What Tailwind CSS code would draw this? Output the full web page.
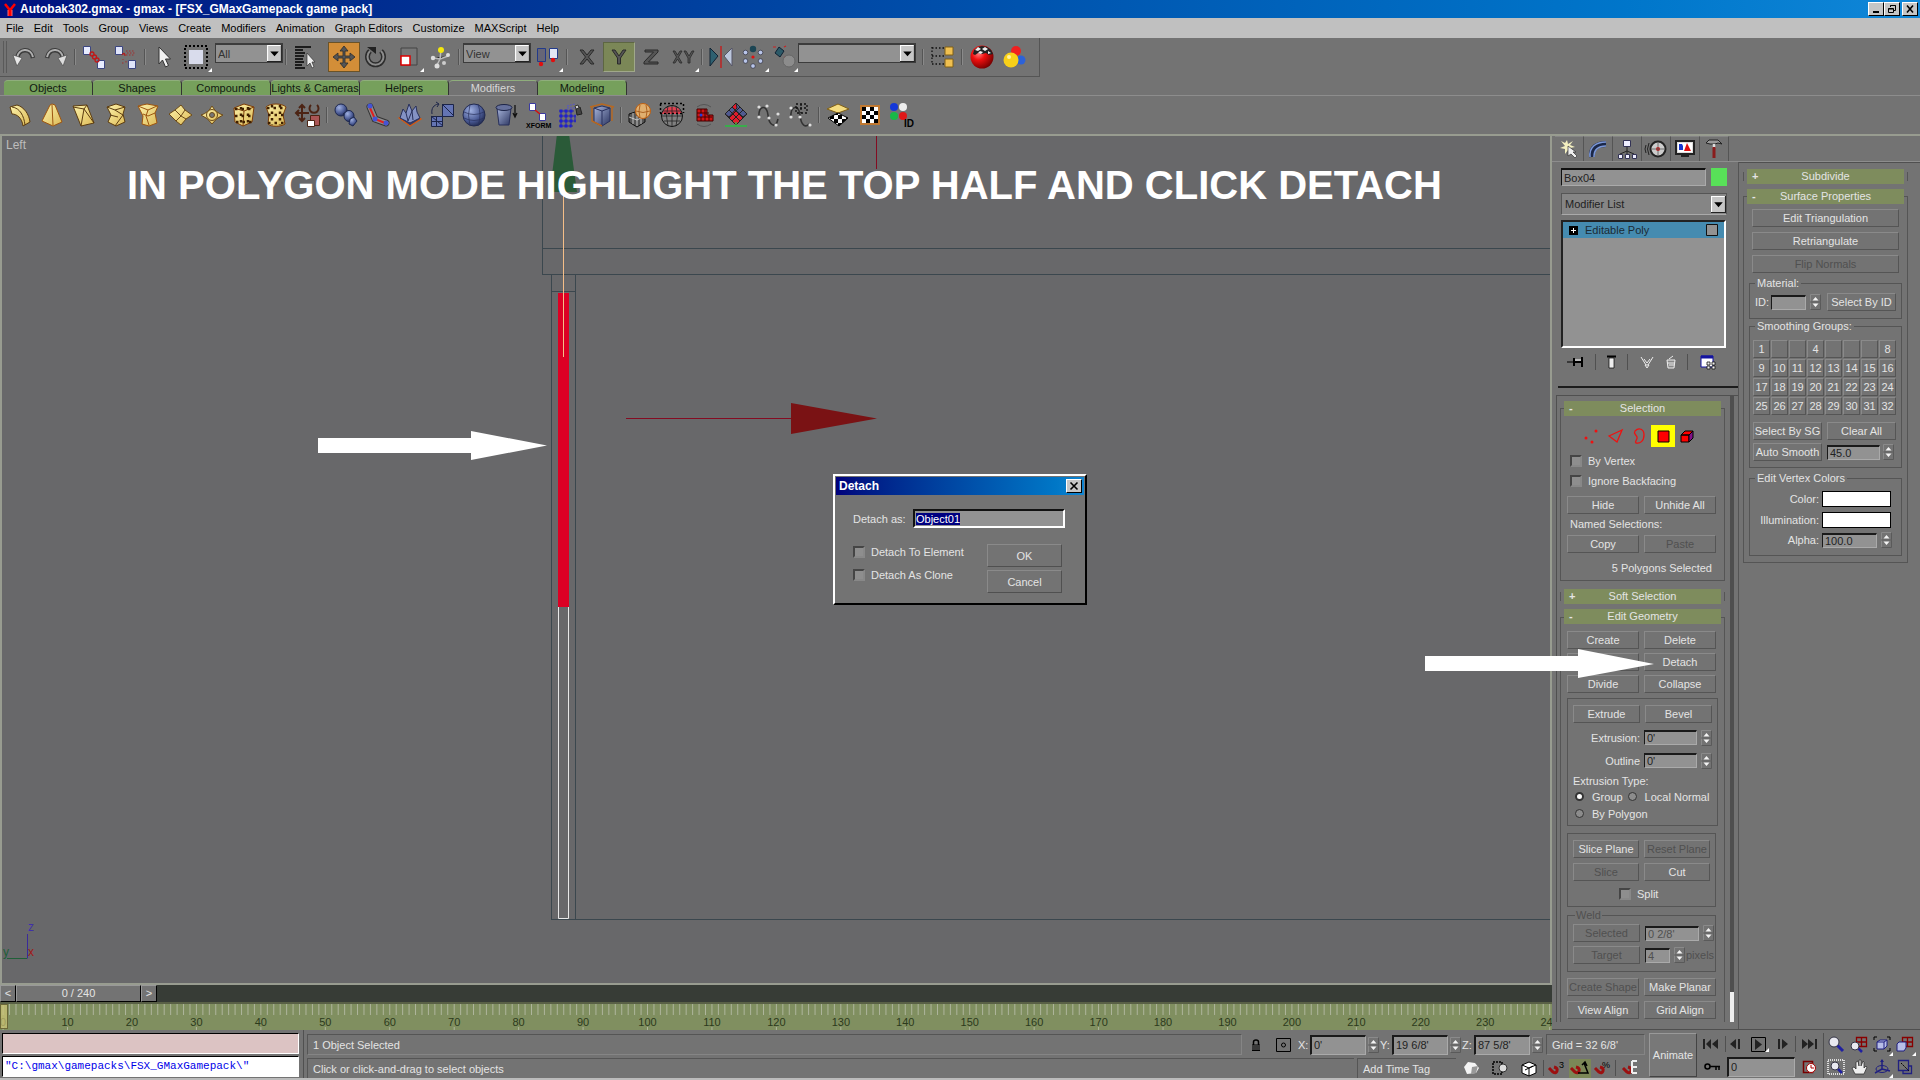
<!DOCTYPE html>
<html lang="en">
<head>
<meta charset="utf-8">
<title>Autobak302.gmax - gmax</title>
<script src="https://cdn.jsdelivr.net/npm/@tailwindcss/browser@4"></script>
</head>
<body class="h-screen min-h-[1080px] min-w-[1500px] overflow-hidden flex flex-col bg-[#737373] text-[11px] leading-[14px] text-[#e4e4e4] font-['Liberation_Sans',Arial,sans-serif] [&_svg]:block [&_svg]:shrink-0 [&_svg]:overflow-visible">

<!-- shared symbols -->
<svg class="absolute" width="0" height="0" aria-hidden="true">
  <symbol id="spin" viewBox="0 0 11 16"><path d="M.5 15.500V.5H10.500" fill="none" stroke="#8a8a8a"/><path d="M.5 15.500H10.500V.5" fill="none" stroke="#5a5a5a"/><path d="M0 8h11" stroke="#606060"/><path d="M5.500 3 8.500 6.500H2.500zM5.500 13 8.500 9.500H2.500z" fill="#f4f4f4"/></symbol>
  <symbol id="drop" viewBox="0 0 14 16"><path d="M0 0h14v16H0z" fill="#c6c6c6"/><path d="M.5 15V.5H13" fill="none" stroke="#fff"/><path d="M0 15.500h13.500V0" fill="none" stroke="#222"/><path d="M3 6h8L7 10.500z" fill="#000"/></symbol>
  <symbol id="fly" viewBox="0 0 4 4"><path d="M4 0v4H0z" fill="#fff"/></symbol>
  <linearGradient id="steel" x1="0" y1="0" x2="1" y2="1"><stop offset="0" stop-color="#a9b6dc"/><stop offset="1" stop-color="#2b3560"/></linearGradient>
  <linearGradient id="gold" x1="0" y1="0" x2="1" y2="1"><stop offset="0" stop-color="#fdf3ac"/><stop offset="1" stop-color="#dcb955"/></linearGradient>
  <radialGradient id="redball" cx=".35" cy=".35" r=".7"><stop offset="0" stop-color="#ff8080"/><stop offset=".4" stop-color="#f01010"/><stop offset="1" stop-color="#700"/></radialGradient>
  <radialGradient id="blueball" cx=".35" cy=".3" r=".8"><stop offset="0" stop-color="#9fb0e0"/><stop offset=".6" stop-color="#4a5a94"/><stop offset="1" stop-color="#1a2244"/></radialGradient>
  <pattern id="chk" width="8" height="8" patternUnits="userSpaceOnUse"><path d="M0 0h8v8H0z" fill="#fff"/><path d="M0 0h4v4H0zM4 4h4v4H4z" fill="#000"/></pattern>
</svg>

<!-- title bar -->
<header class="h-[18px] shrink-0 flex items-center justify-between bg-linear-to-r from-[#00107f] to-[#1087d8] text-white pl-1 pr-[2px]">
  <h1 class="flex items-center gap-[4px] text-[12px] font-bold">
    <svg width="12" height="15" viewBox="0 0 12 15"><path d="M1 2 5 7v7M11 2 7 7v7M6 7v7" stroke="#f00" stroke-width="2.500" fill="none"/><path d="M4 8v6M8 8v6" stroke="#fbb" stroke-width=".6"/></svg>
    Autobak302.gmax - gmax - [FSX_GMaxGamepack game pack]
  </h1>
  <div class="flex text-black [&_button]:w-4 [&_button]:h-[14px] [&_button]:bg-[#c6c6c6] [&_button]:border [&_button]:border-t-white [&_button]:border-l-white [&_button]:border-b-black [&_button]:border-r-black [&_button]:flex [&_button]:items-center [&_button]:justify-center">
    <button aria-label="Minimize"><svg width="10" height="10"><path d="M2 8h6" stroke="#000" stroke-width="2"/></svg></button>
    <button aria-label="Restore"><svg width="10" height="10"><path d="M3.500 3V1.500h5v5H7M3.500 1.500h5M1.500 4.500h5v4h-5zM1.500 5h5" fill="none" stroke="#000"/></svg></button>
    <button aria-label="Close" class="ml-[2px]"><svg width="10" height="10"><path d="M2 1.500 8 8.500M8 1.500 2 8.500" stroke="#000" stroke-width="1.600"/></svg></button>
  </div>
</header>

<!-- menu bar -->
<nav class="h-5 shrink-0 flex items-center gap-[10px] bg-[#c0c0c0] text-black pl-[6px]">
  <a href="#">File</a><a href="#">Edit</a><a href="#">Tools</a><a href="#">Group</a><a href="#">Views</a><a href="#">Create</a><a href="#">Modifiers</a><a href="#">Animation</a><a href="#">Graph Editors</a><a href="#">Customize</a><a href="#">MAXScript</a><a href="#">Help</a>
</nav>

<!-- main toolbar -->
<div class="h-[39px] shrink-0 w-[1040px] flex items-center border-b border-r border-[#555] pl-[2px] [&>button]:relative [&>button]:w-8 [&>button]:h-[30px] [&>button]:shrink-0 [&>button]:flex [&>button]:items-center [&>button]:justify-center [&>i]:w-[2px] [&>i]:mx-[2px] [&>i]:h-4 [&>i]:shrink-0 [&>i]:border-l [&>i]:border-r [&>i]:border-l-[#555] [&>i]:border-r-[#8a8a8a]">
  <span class="w-1 h-8 border-x border-[#5a5a5a] ml-[1px] mr-[1px]"></span>
  <button aria-label="Undo"><svg width="24" height="22"><path d="M5 13C6 2 19 1 21 12" fill="none" stroke="#3c3c3c" stroke-width="4.500"/><path d="M5 12C6 2 19 1 21 11" fill="none" stroke="#b0b0b0" stroke-width="2"/><path d="M1 9 10 12 5 20z" fill="#e8e8e8" stroke="#444" stroke-width=".6"/></svg></button>
  <button aria-label="Redo"><svg width="24" height="22"><path d="M3 12C5 1 18 2 19 13" fill="none" stroke="#3c3c3c" stroke-width="4.500"/><path d="M3 11C5 1 18 2 19 12" fill="none" stroke="#b0b0b0" stroke-width="2"/><path d="M23 9 14 12 19 20z" fill="#ddd" stroke="#444" stroke-width=".6"/></svg></button>
  <i></i>
  <button aria-label="Select and link"><svg width="24" height="24"><path d="M1.500 1.500h7v8h-7zM15.500 15.500h7v8h-7z" fill="#e8ecff" stroke="#3c4680"/><g fill="none" stroke="#c01818" stroke-width="1.300"><circle cx="10" cy="9" r="2"/><circle cx="12.500" cy="12" r="2"/><circle cx="15" cy="15" r="2"/></g></svg></button>
  <button aria-label="Unlink"><svg width="24" height="24"><path d="M1.500 1.500h7v8h-7zM14.500 15.500h7v8h-7z" fill="#dfe4fa" stroke="#3c4680"/><path d="M8 10c2-3 3-1 3 1" fill="none" stroke="#b02020" stroke-width="1.300"/><path d="M12 6h9M13 8h9M12 10h8M9 14v1M12 16v2M8 18h3" fill="none" stroke="#a03030" stroke-dasharray="1.500 1.500"/></svg></button>
  <i></i>
  <button aria-label="Select"><svg width="14" height="24"><path d="M2 2v17l3.500-4 3 7 3-1.500-3-6.500h5z" fill="#f2f2f2" stroke="#333"/></svg></button>
  <button aria-label="Region"><svg width="26" height="26"><path d="M2 2h22v22H2z" fill="none" stroke="#000" stroke-width="2" stroke-dasharray="2 2"/><path d="M6 6h14v14H6z" fill="#d9dcec"/></svg><svg class="absolute right-0 bottom-0" width="4" height="4"><use href="#fly"/></svg></button>
  <div class="self-start mt-[5px] ml-[3px] w-[68px] h-5 flex items-center bg-[#929292] border border-t-2 border-[#3c3c3c] text-[#333]"><select aria-label="Selection filter" class="appearance-none w-0 grow pl-[2px] h-full"><option>All</option></select><svg width="15" height="17"><use href="#drop"/></svg></div>
  <i class="ml-1"></i>
  <button aria-label="Select by name"><svg width="24" height="26"><path d="M2 3h16M2 6h8M2 9h10M2 12h9M2 15h8M2 18h9M2 21h7M2 24h10" stroke="#000" stroke-width="1.500"/><path d="M14 9v13l3-3 2 5 2-1-2-5h3z" fill="#eee" stroke="#333" stroke-width=".7"/></svg></button>
  <button aria-label="Move" class="ml-[7px] bg-[#d38e38] border border-[#6b5328]"><svg width="24" height="24"><path d="M12 1l4 5h-3v5h5V8l5 4-5 4v-3h-5v5h3l-4 5-4-5h3v-5H6v3l-5-4 5-4v3h5V6H8z" fill="#555" stroke="#2b2b2b" stroke-width=".8"/></svg></button>
  <button aria-label="Rotate"><svg width="24" height="24"><path d="M6 6a8 8 0 1 0 11 0" fill="none" stroke="#2c2c2c" stroke-width="5"/><path d="M6 6a8 8 0 1 0 11 0" fill="none" stroke="#8c8c8c" stroke-width="2"/><path d="M3 2h9v7z" fill="#222"/></svg></button>
  <button aria-label="Scale"><svg width="20" height="20"><path d="M3 1h16v17H3z" fill="#777" stroke="#444"/><path d="M3 9h9v9H3z" fill="#fff" stroke="#d00" stroke-width="1.500"/></svg><svg class="absolute right-0 bottom-0" width="4" height="4"><use href="#fly"/></svg></button>
  <button aria-label="Manipulate"><svg width="22" height="22"><path d="M12 4 11 13M5 12l6 1 8-3M11 13l-3 6" stroke="#bbb" stroke-width="1.500"/><circle cx="12" cy="4" r="3" fill="#f4e80c"/><circle cx="4" cy="12" r="2.200" fill="#ddd"/><circle cx="19" cy="9" r="2" fill="#ddd"/><circle cx="8" cy="20" r="2.500" fill="#ddd"/><circle cx="15" cy="17" r="2" fill="#ccc"/></svg></button>
  <i class="mr-[3px]!"></i>
  <div class="self-start mt-[5px] w-[68px] h-5 flex items-center bg-[#929292] border border-t-2 border-[#3c3c3c] text-[#333]"><select aria-label="Coordinate system" class="appearance-none w-0 grow pl-[2px] h-full"><option>View</option></select><svg width="15" height="17"><use href="#drop"/></svg></div>
  <button aria-label="Pivot"><svg width="24" height="22"><path d="M2.500 2.500h8v13h-8z" fill="#667" stroke="#223a8a"/><path d="M14.500 2.500h8v10h-8z" fill="#e2e6f6" stroke="#223a8a"/><circle cx="6" cy="18" r="2.200" fill="#e01010"/><circle cx="18" cy="14" r="2.200" fill="#e01010"/></svg><svg class="absolute right-0 bottom-0" width="4" height="4"><use href="#fly"/></svg></button>
  <i class="mx-[3px]!"></i>
  <button aria-label="Constrain X"><svg width="18" height="18"><path d="M2 2h3l4 5 4-5h3l-5.500 7 5.500 7h-3L9 11l-4 5H2l5.500-7z" fill="#555" stroke="#2a2a2a"/></svg></button>
  <button aria-label="Constrain Y" class="bg-[#7b8757] border border-[#5d6642] border-b-[#a0a88a] border-r-[#a0a88a]"><svg width="18" height="18"><path d="M2 2h3l4 6 4-6h3l-5.500 8v6h-3v-6z" fill="#555" stroke="#2a2a2a"/></svg></button>
  <button aria-label="Constrain Z"><svg width="18" height="18"><path d="M3 2h13v2L6.500 14H16v2H2v-2l9.500-10H3z" fill="#555" stroke="#2a2a2a"/></svg></button>
  <button aria-label="Constrain XY"><svg width="22" height="14"><path d="M1 1h2l2.500 4L8 1h2L6.500 7l3.500 6H8L5.500 9 3 13H1l3.500-6zM12 1h2l3 5 3-5h2l-4 7v5h-2V8z" fill="#555" stroke="#2a2a2a" stroke-width=".8"/></svg><svg class="absolute right-0 bottom-0" width="4" height="4"><use href="#fly"/></svg></button>
  <i></i>
  <button aria-label="Mirror"><svg width="24" height="22"><path d="M1 2l8 8-8 10z" fill="#2e6070" stroke="#123"/><path d="M23 2l-8 8 8 10z" fill="#bcc6dc" stroke="#556"/><path d="M12 0v22" stroke="#d01010" stroke-width="1.200"/></svg></button>
  <button aria-label="Array"><svg width="24" height="24"><circle cx="12" cy="4" r="3.200" fill="#1d4654"/><g fill="#b9c6ea" stroke="#334" stroke-width=".7"><circle cx="4.500" cy="7.500" r="2.300"/><circle cx="19.500" cy="7.500" r="2.300"/><circle cx="4.500" cy="16" r="2.300"/><circle cx="19.500" cy="16" r="2.300"/><circle cx="12" cy="21" r="2.300"/></g><circle cx="12" cy="12" r="1.600" fill="#e01010"/></svg><svg class="absolute right-0 bottom-0" width="4" height="4"><use href="#fly"/></svg></button>
  <button aria-label="Align" class="w-[29px]!"><svg width="26" height="26"><path d="M8 3l5 4-4 6-5-4z" fill="#2c5a68" stroke="#123"/><path d="M2 3h3M13 13l3 2M13 3l2-1" stroke="#c22" stroke-width="1.200"/><circle cx="18" cy="17" r="6" fill="#8c8c8c" stroke="#666"/></svg><svg class="absolute right-0 bottom-0" width="4" height="4"><use href="#fly"/></svg></button>
  <div class="self-start mt-[5px] w-[118px] h-5 flex items-center bg-[#929292] border border-t-2 border-[#3c3c3c] text-[#333]"><select aria-label="Named selection" class="appearance-none w-0 grow pl-[2px] h-full"><option></option></select><svg width="15" height="17"><use href="#drop"/></svg></div>
  <i class="ml-[6px]!"></i>
  <button aria-label="Track view"><svg width="24" height="24"><path d="M2 2v17M2 3h12M2 11h12M2 19h12" stroke="#111" stroke-width="1.300" stroke-dasharray="1.500 2"/><path d="M15 2h8v8h-8zM15 14h8v8h-8z" fill="#f0c050" stroke="#806018"/></svg></button>
  <i class="mx-[3px]!"></i>
  <button aria-label="Materials"><svg width="24" height="24"><circle cx="12" cy="12" r="11.500" fill="url(#redball)"/><path d="M4 5l4-3 4-1 5 1 4 3 2 4-4 1-3-2-4 1-4-1-3 2-2-1z" fill="#222"/><path d="M8 2l3 2-3 2-3-1zM15 2l3 2-3 2-3-2zM10 6l3 1-2 2-3-1zM18 6l3 2-3 1z" fill="#eee"/></svg></button>
  <button aria-label="Material navigator"><svg width="24" height="24"><circle cx="14" cy="6" r="5" fill="#f02020"/><circle cx="19" cy="15" r="4.500" fill="#2c62d8"/><circle cx="9" cy="15" r="7.500" fill="#f8d018"/><circle cx="7" cy="12" r="2" fill="#fff3a0"/></svg></button>
</div>

<!-- tab panel -->
<div class="h-[19px] shrink-0 flex items-end border-b border-[#8d8d8d] pl-1 text-[#101810] [&>button]:w-[89px] [&>button]:h-[15px] [&>button]:shrink-0 [&>button]:border-r [&>button]:border-r-[#333] [&>button]:rounded-t-sm [&>button]:border-t [&>button]:border-t-[#8fae7c] [&>button]:whitespace-nowrap">
  <button class="bg-[#76a05c]">Objects</button><button class="bg-[#76a05c]">Shapes</button><button class="bg-[#76a05c]">Compounds</button><button class="bg-[#76a05c]">Lights &amp; Cameras</button><button class="bg-[#76a05c]">Helpers</button><button class="text-[#d8d8d8]">Modifiers</button><button class="bg-[#76a05c]">Modeling</button>
</div>
<div class="h-[40px] shrink-0 flex items-center pl-1 border-b-2 border-[#989c90] [&>button]:w-8 [&>button]:h-8 [&>button]:shrink-0 [&>button]:flex [&>button]:items-center [&>button]:justify-center [&>i]:w-[2px] [&>i]:mx-[2px] [&>i]:h-4 [&>i]:border-l [&>i]:border-r [&>i]:border-l-[#555] [&>i]:border-r-[#8a8a8a]">
  <button aria-label="Bend"><svg width="24" height="24" stroke="#5c3c10" fill="url(#gold)"><path d="M2 4l7-2c7 2 12 9 13 17l-7 4C14 15 9 11 4 11z"/><path d="M4 4c8 1 12 9 13 18" fill="none"/></svg></button>
  <button aria-label="Taper"><svg width="24" height="24" stroke="#9c5410" fill="url(#gold)"><path d="M12 1l3 1 7 17-9 4L2 18 10 2z"/><path d="M12 2l1 20" fill="none"/></svg></button>
  <button aria-label="Skew"><svg width="24" height="24" stroke="#5c3c10" fill="url(#gold)"><path d="M1 3l14-1 7 18-13 3z"/><path d="M1 4l11 2 10 14M12 6l3-4M12 6l-3 17" fill="none"/></svg></button>
  <button aria-label="Twist"><svg width="24" height="24" stroke="#5c3c10" fill="url(#gold)"><path d="M3 4l9-3 9 3-2 7 2 8-9 4-8-4 3-7z"/><path d="M3 4l8 3 10-3M11 7l8 5-8 11M6 12l8 2" fill="none"/></svg></button>
  <button aria-label="Noise"><svg width="24" height="24" stroke="#9c5410" fill="url(#gold)"><path d="M2 3l9-2 11 2-3 7 2 10-8 3-7-2 1-8z"/><path d="M2 3l10 4 9-4M12 7l-2 6 3 9M7 11l5 2 7-3" fill="none"/></svg></button>
  <button aria-label="Wave"><svg width="26" height="24" stroke="#6c4a18" fill="url(#gold)"><path d="M2 11l6-4 6-5 4 5 7 5-6 4-5 6-5-4z"/><path d="M8 7l6 6 5 3M18 7l-4 6-5 5" fill="none"/></svg></button>
  <button aria-label="Ripple"><svg width="26" height="24" stroke="#6c4a18" fill="url(#gold)"><path d="M2 12Q9 10 13 3q4 7 11 9-7 3-11 9-4-6-11-9z"/><circle cx="13" cy="12" r="5.500"/><circle cx="13" cy="12" r="2.500" fill="#777"/></svg></button>
  <button aria-label="FFD box"><svg width="24" height="24" stroke="#7c3c08" fill="url(#gold)"><path d="M2 5l10-4 10 3-2 15-9 4-8-4z"/><path d="M2 5l10 3 10-4M12 8l-1 15" fill="none"/><path d="M3 6h18M3 13h18M4 19h16M9 4v18M16 4v16" fill="none" stroke="#402000" stroke-width="2.500" stroke-dasharray="2.500 4"/></svg></button>
  <button aria-label="FFD cylinder"><svg width="22" height="24" stroke="#7c3c08" fill="url(#gold)"><path d="M1 4c4-4 16-4 20 0l-3 8 2 9c-4 3-14 3-17 0l1-9z"/><path d="M2 5h19M3 12h16M3 20h17M7 2v20M15 2v20" fill="none" stroke="#402000" stroke-width="2.500" stroke-dasharray="2.500 4"/></svg></button>
  <button aria-label="Transform"><svg width="26" height="26"><path d="M7 3v16M1 11h13M4 6l3-3 3 3M4 16l3 3 3-3M4 8l-3 3 3 3" fill="none" stroke="#4c2414" stroke-width="2"/><path d="M16 3a4.500 4.500 0 1 0 6 0" fill="none" stroke="#4c2414" stroke-width="2"/><path d="M15.500 13.500h9v10h-9z" fill="#a55" stroke="#4c2414"/><path d="M12.500 18.500h7v6h-7z" fill="#fff" stroke="#4c2414"/></svg></button>
  <i></i>
  <button aria-label="Skin"><svg width="24" height="24" fill="url(#blueball)" stroke="#1d2850"><circle cx="7" cy="7" r="6"/><path d="M9 11l5-4 4 4-5 5z"/><ellipse cx="15" cy="13" rx="5" ry="5.500"/><path d="M16 16l4-2 3 4-4 5-4-2z"/></svg></button>
  <button aria-label="Bones"><svg width="24" height="24"><path d="M4 4l5 12 11 4" fill="none" stroke="#333" stroke-width="7" stroke-linecap="round"/><path d="M4 4l5 12 11 4" fill="none" stroke="#8c8c8c" stroke-width="5" stroke-linecap="round"/><path d="M4 5l5 11 10 4" fill="none" stroke="#e02020" stroke-width="2"/><g fill="#4454d4"><circle cx="4" cy="3" r="2.500"/><circle cx="9" cy="16" r="2.500"/><circle cx="20" cy="20" r="2.500"/></g></svg></button>
  <button aria-label="Displace"><svg width="26" height="26"><path d="M2 16l11-5 11 6-11 7z" fill="#383f68" stroke="#d85a10" stroke-width="1.300"/><path d="M3 16l3-9 3 4 3-9 3 7 4-5 1 6 3 6-10 5z" fill="#8492c4" stroke="#28305c"/><path d="M9 11l2 8 4-10 1 9" fill="none" stroke="#28305c"/></svg></button>
  <button aria-label="UV scale"><svg width="26" height="26" fill="#6474b4" stroke="#1c2448"><path d="M13.500 2.500h11v12h-11zM2.500 14.500h5v5h-5zM7.500 14.500h6v5h-6zM2.500 19.500h5v5h-5zM7.500 19.500h6v5h-6z"/><path d="M13 2l12 12M2 14l12 10M3 12C2 6 5 3 9 2M7 0l3 2-2 3" fill="none"/></svg></button>
  <button aria-label="Spherify"><svg width="24" height="24"><circle cx="12" cy="12" r="11" fill="url(#blueball)" stroke="#222a50"/><path d="M2 9q10 5 20 0M2 15q10 5 20 0M8 1q-3 11 0 22M16 1q4 11 0 22" fill="none" stroke="#28305c" stroke-width=".7"/></svg></button>
  <button aria-label="Push"><svg width="24" height="24"><path d="M3 5h14l-2 17H5z" fill="url(#steel)" stroke="#28305c"/><ellipse cx="10" cy="4.500" rx="8" ry="3" fill="#66719c" stroke="#1c2448"/><path d="M21 2v11M19 10l2 4 2-4" stroke="#111" stroke-width="1.300" fill="none"/></svg></button>
  <button aria-label="XForm"><svg width="26" height="26"><path d="M4.500 1.500h6v7h-6zM14.500 11.500h6v7h-6z" fill="#fff" stroke="#3a3aa0"/><path d="M10 8l5 4" stroke="#d01010" stroke-width="1.600"/><text x="1" y="26" font-size="7" font-weight="bold" fill="#000">XFORM</text></svg></button>
  <button aria-label="FFD select"><svg width="26" height="24"><path d="M2 8h15M2 13h17M2 18h17M2 23h14M4 7v17M9 7v17M14 7v17M18 12v7" stroke="#2828a8" stroke-width="1"/><path d="M2.500 8h15M2.500 13h16M2.500 18h16M2.500 23h12" stroke="#2020d0" stroke-width="3" stroke-dasharray="3 2"/><path d="M10 3l8-2M10 5h8" stroke="#55c" stroke-dasharray="2 1"/><path d="M19 6l4-2 2 7-5 1z" fill="#444" stroke="#222"/><path d="M18 3l3-1 1 3-3 1z" fill="#ccc" stroke="#333"/></svg></button>
  <button aria-label="Shell"><svg width="26" height="24"><path d="M5 5l8-2 8 2v13l-8 5-8-4z" fill="url(#steel)" stroke="#28305c"/><path d="M5 5l8 3 8-3M13 8v15" fill="none" stroke="#28305c"/><path d="M1 4l12-3 12 3M3 4v14l10 5M23 4v14" fill="none" stroke="#b86820" stroke-width="1.400"/></svg></button>
  <i></i>
  <button aria-label="Mesh select"><svg width="26" height="24"><path d="M2 11l9-3 7 4v7l-8 5-8-5z" fill="#555" stroke="#111"/><path d="M2 14l8 3 8-4M6 10v11M14 10v11M10 13v10" stroke="#ddd" stroke-width=".8" fill="none"/><circle cx="16" cy="8" r="7.500" fill="#e0b070" stroke="#c06010"/><path d="M9 8q7 3 14 0M13 2q-2 6 0 13M19 2q2 6 0 13" fill="none" stroke="#a05010" stroke-width=".8"/></svg></button>
  <button aria-label="Sphere select"><svg width="26" height="26"><circle cx="13" cy="14" r="10.500" fill="#808080" stroke="#111"/><path d="M3 12a10.500 10.500 0 0 1 20 0z" fill="#e04050"/><path d="M3 14h20M4 9h18M5 19h16M9 4q-3 10 0 20M13 3v21M17 4q3 10 0 20" fill="none" stroke="#222" stroke-width=".8"/><path d="M1.500 2v9M24.500 2v9M1 1.500h24M1 11.500h24" stroke="#000" stroke-width="1.500" stroke-dasharray="2 2"/></svg></button>
  <button aria-label="Delete mesh"><svg width="24" height="24"><path d="M5 4q7-5 14 0M5 21q7 5 14 0" fill="none" stroke="#555"/><path d="M5 6h10v6h6v6H5z" fill="#d01414" stroke="#400"/><path d="M5 10h12M5 14h15M9 6v12M13 6v12M17 12v6" stroke="#400"/><circle cx="9" cy="12" r="1.500" fill="#2040e0"/></svg></button>
  <button aria-label="Poly select"><svg width="26" height="26"><path d="M13 1l11 11-11 11L2 12z" fill="#e01c2c" stroke="#222"/><path d="M13 1l11 11-4 3L9 5zM13 1 2 12l4 3 8-9z" fill="#505a90" stroke="#222"/><path d="M9 5l11 11M6 8l11 11M17 5 6 16M20 8 9 19" stroke="#222"/><path d="M2 24h22M13 20v4" stroke="#28c040" stroke-width="1.300"/></svg></button>
  <button aria-label="Spline"><svg width="24" height="24"><path d="M3 15C2 2 11 1 12 12s8 14 10 4" fill="none" stroke="#333" stroke-width="1.600"/><g fill="#ddd"><circle cx="3" cy="4" r="1.600"/><circle cx="3" cy="14" r="1.600"/><circle cx="11" cy="3" r="1.600"/><circle cx="13" cy="15" r="1.600"/><circle cx="20" cy="22" r="1.600"/><circle cx="22" cy="11" r="1.600"/></g></svg></button>
  <button aria-label="Spline select"><svg width="24" height="24"><path d="M3 15C2 2 11 1 12 12s6 13 9 9" fill="none" stroke="#333" stroke-width="1.600"/><path d="M8 1h11v9H8zM8 5h11M13 1v9" fill="none" stroke="#111" stroke-width="1.300" stroke-dasharray="2 2"/><g fill="#ddd"><circle cx="3" cy="5" r="1.600"/><circle cx="3" cy="14" r="1.600"/><circle cx="12" cy="14" r="1.600"/><circle cx="22" cy="22" r="1.600"/></g></svg></button>
  <i></i>
  <button aria-label="UVW map"><svg width="24" height="24"><path d="M12 1l11 5-11 4L1 6z" fill="#f4dc80" stroke="#806018"/><path d="M12 10l10 5-9 8L2 15z" fill="url(#chk)" stroke="#000"/></svg></button>
  <button aria-label="Unwrap"><svg width="20" height="20"><path d="M1 1h18v18H1z" fill="#fff" stroke="#c07830" stroke-width="2"/><path d="M2 2h4v4H2zM10 2h4v4h-4zM6 6h4v4H6zM14 6h4v4h-4zM2 10h4v4H2zM10 10h4v4h-4zM6 14h4v4H6zM14 14h4v4h-4z" fill="#000"/></svg></button>
  <button aria-label="Material ID"><svg width="26" height="26"><circle cx="5" cy="5" r="4" fill="#1438d8"/><circle cx="14" cy="5" r="4" fill="#eee"/><circle cx="5" cy="14" r="4" fill="#18b848"/><circle cx="14" cy="14" r="4" fill="#e01818"/><text x="15" y="25" font-size="10" font-weight="bold" fill="#000">ID</text></svg></button>
</div>

<!-- workspace -->
<main class="grow flex min-h-0">
  <div class="grow min-w-0 flex flex-col">
    <!-- viewport -->
    <div class="relative grow overflow-hidden bg-[#68686a] border-x-2 border-b-2 border-[#989c90]">
      <svg class="absolute -left-[2px] -top-[136px]" width="100%" height="100%">
        <g stroke="#3b474e" fill="none" shape-rendering="crispEdges">
          <path d="M542.500 134V274.500M542 248.500H4000M542 274.500H4000M551.500 274V919.500M575.500 274V919.500M551 291.500H576M551 919.500H4000"/>
        </g>
        <path d="M558.500 607V918.500H568.500V607" fill="none" stroke="#e8e8e8"/>
        <path d="M558 293h11v314h-11z" fill="#dc0024"/>
        <path d="M557 134h12l8 58h-27z" fill="#2a5a38"/>
        <path d="M563.500 192v165" stroke="#f4be88"/>
        <path d="M876.500 134v35M626 418.500h166" stroke="#840c22"/>
        <path d="M791 403l86 15.500-86 15.500z" fill="#7a1214"/>
        <path d="M318 438h153v-7l76 14.500-76 14.500v-7H318z" fill="#fff"/>
        <path d="M27.500 934v24.500" stroke="#3a2a9a"/><path d="M7 958.500h20" stroke="#206038"/>
        <g font-size="12"><text x="28" y="931" fill="#4030a8">z</text><text x="3" y="956" fill="#206038">y</text><text x="28" y="956" fill="#a01818">x</text></g>
      </svg>
      <div class="relative">
        <span class="block pl-1 pt-[2px] text-[12px] text-[#bdbdbd]">Left</span>
        <p class="mt-[13px] pl-[125px] text-[40px] leading-[40px] font-bold text-white whitespace-nowrap">IN POLYGON MODE HIGHLIGHT THE TOP HALF AND CLICK DETACH</p>
      </div>
    </div>
    <!-- time slider -->
    <div class="h-[17px] shrink-0 flex bg-[#373c36] [&>button]:border [&>button]:border-t-[#999] [&>button]:border-l-[#999] [&>button]:border-b-black [&>button]:border-r-black [&>button]:bg-[#737373] [&>button]:leading-[13px]">
      <button class="w-4">&lt;</button><button class="w-[125px]">0 / 240</button><button class="w-4">&gt;</button>
    </div>
    <div class="relative h-[28px] shrink-0 bg-[#808f60] border-t-2 border-[#596046] overflow-hidden">
      <svg id="track" class="w-full h-full" aria-label="Timeline"></svg>
      <div class="absolute left-0 top-0 w-[8px] h-[25px] border border-[#6c6838] bg-[#d2c878]/70"></div>
    </div>
  </div>

  <!-- command panel -->
  <aside class="w-[368px] shrink-0 flex flex-col border-b border-[#4e4e4e] [&_button]:whitespace-nowrap [&_input]:min-w-0">
    <div class="h-[26px] shrink-0 flex items-end border-b border-[#8d8d8d] pl-[3px] [&>button]:w-[29px] [&>button]:h-[25px] [&>button]:flex [&>button]:items-center [&>button]:justify-center [&>button]:border-r [&>button]:border-r-[#555] [&>button]:border-t [&>button]:border-t-[#858585]">
      <button aria-label="Create"><svg width="20" height="20"><path d="M8 1l1 4 5-3-3 4 5 2-5 1 2 5-4-3-3 4v-5L1 9l5-2-4-5 4 2z" fill="#f4f0c0"/><path d="M9 7v10l3-2 4 4 2-2-4-4h3z" fill="#eee" stroke="#333" stroke-width=".7"/></svg></button>
      <button aria-label="Modify"><svg width="20" height="20"><path d="M4 18C3 9 9 5 18 5" fill="none" stroke="#1c2848" stroke-width="6"/><path d="M2 18C1 8 8 3 18 3M6 18c0-7 4-11 12-11" fill="none" stroke="#7c98d8" stroke-width="1.600"/></svg></button>
      <button aria-label="Hierarchy"><svg width="20" height="20"><path d="M10 7v5M3 15l7-3 7 3M10 12v4" stroke="#222" fill="none"/><path d="M6.500 1.500h7v6h-7zM1.500 15.500h4v4h-4zM8.500 15.500h4v4h-4zM15.500 15.500h4v4h-4z" fill="#eef" stroke="#335"/></svg></button>
      <button aria-label="Motion"><svg width="22" height="18"><circle cx="13" cy="9" r="7.500" fill="#ccc" stroke="#222" stroke-width="2"/><circle cx="13" cy="9" r="2" fill="#e01010"/><path d="M13 3v12M7 9h12" stroke="#555" stroke-width=".8"/><path d="M4 3q-3 6 0 12M1 5q-2 4 0 8" fill="none" stroke="#222"/></svg></button>
      <button aria-label="Display"><svg width="20" height="18"><path d="M1 1h18v13H1zM6 16h8" fill="#ddd" stroke="#222" stroke-width="2"/><path d="M3 3h14v9H3z" fill="#fff"/><path d="M4 4h3l1 2v4H4z" fill="#1838d0"/><path d="M12 3l4 8h-7z" fill="#e01010"/></svg></button>
      <button aria-label="Utilities"><svg width="18" height="20"><path d="M1 4l3-3h9l4 4-4-1-3 1H5z" fill="#999" stroke="#222"/><path d="M9 5v4" stroke="#ddd" stroke-width="2.500"/><path d="M9 8v11" stroke="#8a1c1c" stroke-width="3"/></svg></button>
    </div>
    <div class="grow flex min-h-0">
      <div class="w-[187px] shrink-0 flex flex-col border-r border-[#555]">
        <div class="pl-[9px] shrink-0">
          <div class="mt-[6px] flex gap-[5px]">
            <input aria-label="Object name" value="Box04" class="w-[145px] h-[18px] pl-[2px] bg-[#929292] text-[#222] border border-t-2 border-[#111] border-b-[#aaa] border-r-[#aaa]">
            <button aria-label="Object colour" class="w-4 h-[18px] bg-[#58e058]"></button>
          </div>
          <div class="mt-[7px] w-[166px] h-[22px] flex items-center bg-[#858585] border border-[#555] border-b-[#aaa] text-[#222]"><select aria-label="Modifier list" class="appearance-none w-0 grow pl-[3px] h-full"><option>Modifier List</option></select><svg width="15" height="19"><use href="#drop"/></svg></div>
          <div class="mt-[5px] w-[165px] h-[128px] bg-[#929292] border-2 border-t-[#222] border-l-[#222] border-b-white border-r-white">
            <div class="h-4 flex items-center bg-[#458bb0] text-[#1c2a33] px-[6px]">
              <svg width="9" height="9"><path d="M0 0h9v9H0z" fill="#000"/><path d="M2 4.500h5M4.500 2v5" stroke="#fff"/></svg><span class="ml-[7px] grow">Editable Poly</span><svg width="12" height="12"><path d="M.5.500h11v11H.5z" fill="#929292" stroke="#111"/></svg>
            </div>
          </div>
          <div class="h-7 w-[166px] flex items-center justify-between pl-[6px] pr-[11px] [&_i]:h-4 [&_i]:w-[2px] [&_i]:border-l [&_i]:border-[#505050]">
            <button aria-label="Pin"><svg width="17" height="12"><path d="M0 6h7" stroke="#000"/><path d="M7 2v8M8 6h7M15 1v10" stroke="#000" stroke-width="2"/><path d="M8 4h6" stroke="#fff"/></svg></button><i></i>
            <button aria-label="Show end result"><svg width="9" height="14"><path d="M0 1.500h9" stroke="#000" stroke-width="2"/><path d="M2 3h5v10H2z" fill="#eee" stroke="#000" stroke-width=".7"/></svg></button><i></i>
            <button aria-label="Make unique"><svg width="14" height="14"><path d="M1 2l5 8M13 2 8 10M4 4l3 4 3-4M5 10h4l-2 3z" fill="none" stroke="#eee"/></svg></button>
            <button aria-label="Remove"><svg width="12" height="14"><path d="M2 5h8l-1 8H3zM4 4l4-3M2 8h8M4 10h5" fill="#888" stroke="#eee"/></svg></button><i></i>
            <button aria-label="Configure"><svg width="16" height="14"><path d="M1 1h12v11H1z" fill="#fff" stroke="#1414a0"/><path d="M1 2h12" stroke="#1414a0" stroke-width="3"/><path d="M7 7h3v3H7zM12 7h3v3h-3zM7 11h3v3H7zM12 11h3v3h-3z" fill="#eee" stroke="#111" stroke-width=".8"/></svg></button>
          </div>
        </div>
        <div class="mt-[10px] ml-[6px] h-[2px] shrink-0 bg-[#1c1c1c]"></div>
        <div class="mt-[7px] ml-1 mb-[7px] grow min-h-0 flex border-l border-t border-[#505050]">
          <!-- rollouts -->
          <div class="ml-[3px] mr-[5px] w-[165px] overflow-hidden shrink-0 [&_h2]:h-[15px] [&_h2]:mx-[3px] [&_h2]:bg-[#7e8c5d] [&_h2]:grid [&_h2]:grid-cols-[14px_1fr_14px] [&_h2]:text-center [&_b]:text-left [&_b]:pl-[5px] [&_button]:h-[18px] [&_button]:border [&_button]:border-[#8a8a8a] [&_button]:border-b-[#555] [&_button]:border-r-[#555] [&_button:disabled]:text-[#505050] [&_input[type=checkbox]]:appearance-none [&_input[type=checkbox]]:w-3 [&_input[type=checkbox]]:h-3 [&_input[type=checkbox]]:bg-[#8e8e8e] [&_input[type=checkbox]]:border-2 [&_input[type=checkbox]]:border-t-[#454545] [&_input[type=checkbox]]:border-l-[#454545] [&_input[type=checkbox]]:border-b-[#888] [&_input[type=checkbox]]:border-r-[#888] [&_input[type=text]]:h-[15px] [&_input[type=text]]:pl-[2px] [&_input[type=text]]:bg-[#929292] [&_input[type=text]]:text-[#222] [&_input[type=text]]:border [&_input[type=text]]:border-t-2 [&_input[type=text]]:border-[#1a1a1a] [&_input[type=text]]:border-b-[#aaa] [&_input[type=text]]:border-r-[#aaa] [&_fieldset]:border [&_fieldset]:border-[#555] [&_label]:flex [&_label]:items-center">
            <section class="mt-3 h-[173px] border border-[#555]">
              <h2 class="-mt-[8px]"><b>-</b>Selection</h2>
              <div class="pl-[6px] pr-[8px]">
                <div class="mt-[9px] pl-[12px] h-[22px] flex items-center [&_button]:border-0! [&_button]:h-[22px]! [&_button]:w-6 [&_button]:flex [&_button]:items-center [&_button]:justify-center">
                  <button aria-label="Vertex"><svg width="14" height="14" fill="#f01010"><circle cx="2" cy="9" r="1.500"/><circle cx="12" cy="2" r="1.500"/><circle cx="8" cy="13" r="1.500"/></svg></button>
                  <button aria-label="Edge"><svg width="15" height="14"><path d="M1 7 14 1 9 13z" fill="none" stroke="#f01010" stroke-width="1.300"/></svg></button>
                  <button aria-label="Border"><svg width="12" height="16"><path d="M2 3c4-4 9-2 9 4s-4 9-8 8c-2-2 2-3 1-6S0 6 2 3z" fill="none" stroke="#f01010" stroke-width="1.300"/></svg></button>
                  <button aria-label="Polygon" class="bg-[#ffff00]"><svg width="13" height="13"><path d="M1 1h11v11H1z" fill="#f00" stroke="#000"/></svg></button>
                  <button aria-label="Element"><svg width="14" height="13"><path d="M1 5h8v7H1zM1 5l4-4h8L9 5z" fill="#f00" stroke="#000"/><path d="M9 5l4-4v7l-4 4z" fill="#801088" stroke="#000"/></svg></button>
                </div>
                <label class="mt-1 h-5 gap-[6px] pl-[3px]"><input type="checkbox">By Vertex</label>
                <label class="h-5 gap-[6px] pl-[3px]"><input type="checkbox">Ignore Backfacing</label>
                <div class="mt-[5px] grid grid-cols-2 gap-x-[5px]"><button>Hide</button><button>Unhide All</button>
                  <p class="col-span-2 h-[21px] leading-[20px] pl-[3px]">Named Selections:</p>
                  <button>Copy</button><button disabled>Paste</button></div>
                <p class="text-right pr-[4px] mt-2">5 Polygons Selected</p>
              </div>
            </section>
            <section class="mt-[11px] h-[9px] border-x border-[#555]"><h2 class="relative -top-[3px]"><b>+</b>Soft Selection</h2></section>
            <section class="mt-4 h-[430px] border border-[#555]">
              <h2 class="-mt-[9px]"><b>-</b>Edit Geometry</h2>
              <div class="pl-[6px] pr-[8px] mt-[7px]">
                <div class="grid grid-cols-2 gap-x-[5px] gap-y-[4px]"><button>Create</button><button>Delete</button><button>Attach</button><button>Detach</button><button>Divide</button><button>Collapse</button></div>
                <fieldset class="mt-[5px] h-[128px] px-[5px] pt-[6px] flex flex-col">
                  <div class="grid grid-cols-2 gap-[5px]"><button>Extrude</button><button>Bevel</button></div>
                  <div class="mt-[6px] h-[17px] flex items-center"><label for="extr" class="w-[71px] justify-end pr-[4px]">Extrusion:</label><input type="text" id="extr" value="0'" class="w-[53px]"><svg class="ml-1" width="11" height="16"><use href="#spin"/></svg></div>
                  <div class="mt-[6px] h-[17px] flex items-center"><label for="outl" class="w-[71px] justify-end pr-[4px]">Outline</label><input type="text" id="outl" value="0'" class="w-[53px]"><svg class="ml-1" width="11" height="16"><use href="#spin"/></svg></div>
                  <p class="mt-[5px]">Extrusion Type:</p>
                  <div class="flex flex-wrap gap-x-[5px] pl-[2px] -mr-[5px] [&_label]:gap-[8px] [&_label]:h-[17px] [&_label]:whitespace-nowrap [&_input]:appearance-none [&_input]:w-[9px] [&_input]:h-[9px] [&_input]:shrink-0 [&_input]:rounded-full [&_input]:border [&_input]:border-[#333] [&_input]:bg-[#8c8c8c] [&_input:checked]:bg-white [&_input:checked]:border-2">
                    <label><input type="radio" name="et" checked>Group</label><label><input type="radio" name="et">Local Normal</label><label><input type="radio" name="et">By Polygon</label>
                  </div>
                </fieldset>
                <fieldset class="mt-[7px] h-[74px] px-[5px] pt-[6px]">
                  <div class="grid grid-cols-2 gap-[5px]"><button>Slice Plane</button><button disabled>Reset Plane</button><button disabled>Slice</button><button>Cut</button></div>
                  <label class="mt-1 h-[18px] gap-[6px] pl-[46px]"><input type="checkbox">Split</label>
                </fieldset>
                <fieldset class="mt-[2px] h-[63px] pl-[5px] text-[#505050] [&_input[type=text]]:text-[#505050]!">
                  <legend class="ml-[2px] px-[1px] leading-[12px]">Weld</legend>
                  <div class="mt-[3px] flex items-center"><button disabled class="w-[67px]">Selected</button><input aria-label="Weld distance" type="text" value="0 2/8'" class="w-[54px] ml-[5px]"><svg class="ml-1" width="11" height="16"><use href="#spin"/></svg></div>
                  <div class="mt-[4px] flex items-center"><button disabled class="w-[67px]">Target</button><input aria-label="Weld pixels" type="text" value="4" class="w-[25px] ml-[5px]"><svg class="ml-[4px] mr-[1px]" width="11" height="16"><use href="#spin"/></svg>pixels</div>
                </fieldset>
                <div class="mt-[6px] grid grid-cols-2 gap-x-[5px] gap-y-[5px]"><button disabled>Create Shape</button><button>Make Planar</button><button>View Align</button><button>Grid Align</button></div>
              </div>
            </section>
          </div>
          <div class="w-1 bg-[#4f4f4f] flex items-end"><div class="w-full h-[30px] bg-[#eee]"></div></div>
        </div>
      </div>

      <!-- second column -->
      <div class="grow min-w-0 border-t border-[#505050] pl-1 mb-1 [&_h2]:h-[15px] [&_h2]:mx-[3px] [&_h2]:bg-[#7e8c5d] [&_h2]:grid [&_h2]:grid-cols-[14px_1fr_14px] [&_h2]:text-center [&_b]:text-left [&_b]:pl-[5px] [&_button]:h-[18px] [&_button]:border [&_button]:border-[#8a8a8a] [&_button]:border-b-[#555] [&_button]:border-r-[#555] [&_button:disabled]:text-[#505050] [&_input]:h-[15px] [&_input]:pl-[2px] [&_input]:bg-[#929292] [&_input]:text-[#222] [&_input]:border [&_input]:border-t-2 [&_input]:border-[#1a1a1a] [&_input]:border-b-[#aaa] [&_input]:border-r-[#aaa] [&_fieldset]:border [&_fieldset]:border-[#555] [&_legend]:ml-[2px] [&_legend]:px-[2px] [&_legend]:leading-[12px]">
        <section class="mt-[9px] w-[165px] h-[9px] border-x border-[#555]"><h2 class="relative -top-[3px]"><b>+</b>Subdivide</h2></section>
        <section class="mt-[15px] w-[165px] h-[367px] border border-[#555]">
          <h2 class="-mt-[8px]"><b>-</b>Surface Properties</h2>
          <div class="px-[5px] mt-[5px]">
            <div class="grid gap-[5px] px-[3px]"><button>Edit Triangulation</button><button>Retriangulate</button><button disabled>Flip Normals</button></div>
            <fieldset class="mt-1 h-[42px] px-[3px]">
              <legend>Material:</legend>
              <div class="mt-1 flex items-center"><label for="mid" class="ml-[2px] w-[16px]">ID:</label><input id="mid" class="w-[35px]"><svg class="ml-[4px] mr-[6px]" width="11" height="16"><use href="#spin"/></svg><button class="w-[69px]">Select By ID</button></div>
            </fieldset>
            <fieldset class="mt-[1px] h-[148px] px-[3px]">
              <legend>Smoothing Groups:</legend>
              <div id="groups" class="mt-2 grid grid-cols-8 gap-x-px gap-y-px w-[143px]"></div>
              <div class="mt-[7px] grid grid-cols-[69px_69px] gap-x-[5px] gap-y-[3px] items-center"><button>Select By SG</button><button>Clear All</button><button>Auto Smooth</button>
                <span class="flex items-center gap-[3px]"><input aria-label="Smoothing angle" value="45.0" class="w-[53px]"><svg width="11" height="16"><use href="#spin"/></svg></span></div>
            </fieldset>
            <fieldset class="mt-[4px] h-[84px] px-[3px] [&_label]:w-[69px] [&_label]:text-right [&_label]:pr-[3px]">
              <legend>Edit Vertex Colors</legend>
              <div class="mt-[7px] h-4 flex items-center"><label for="vc">Color:</label><button id="vc" aria-label="Vertex color" class="w-[69px] h-4! bg-white border-black!"></button></div>
              <div class="mt-[5px] h-4 flex items-center"><label for="vi">Illumination:</label><button id="vi" aria-label="Illumination color" class="w-[69px] h-4! bg-white border-black!"></button></div>
              <div class="mt-[4px] h-4 flex items-center"><label for="va">Alpha:</label><input id="va" value="100.0" class="w-[55px]"><svg class="ml-1" width="11" height="16"><use href="#spin"/></svg></div>
            </fieldset>
          </div>
        </section>
      </div>
    </div>
  </aside>
</main>

<!-- status bar -->
<footer class="h-[50px] shrink-0 flex border-b-2 border-[#bbb] [&_input]:min-w-0 [&_input]:h-5 [&_input]:w-14 [&_input]:pl-[2px] [&_input]:bg-[#929292] [&_input]:text-[#222] [&_input]:border [&_input]:border-t-2 [&_input]:border-l-2 [&_input]:border-[#1a1a1a] [&_input]:border-b-[#aaa] [&_input]:border-r-[#aaa] [&_i]:w-[2px] [&_i]:h-4 [&_i]:border-l [&_i]:border-[#505050]">
  <div class="w-[304px] shrink-0 pt-[3px] pl-[2px] pr-[4px] border-r border-[#505050] font-['Liberation_Mono','Courier_New',monospace] text-[11px] text-[#0000e8]">
    <div class="h-[21px] bg-[#dcc3c3] border border-t-black border-l-black border-b-white border-r-white"></div>
    <div class="mt-[2px] h-[21px] pl-[2px] leading-[19px] bg-white border border-t-black border-l-black border-white whitespace-nowrap">"C:\gmax\gamepacks\FSX_GMaxGamepack\"</div>
  </div>
  <div class="grow min-w-0 ml-[3px] pt-1 flex flex-col gap-[3px]">
    <div class="h-[21px] flex items-center">
      <p class="grow h-full pl-[5px] leading-[20px] border border-[#555] border-b-[#858585] border-r-[#858585]">1 Object Selected</p>
      <button aria-label="Lock selection" class="w-7 flex justify-center"><svg width="10" height="12"><path d="M2.500 6V3q0-2 2.500-2t2.500 2v3" fill="none" stroke="#000" stroke-width="1.500"/><path d="M1 6h8M1 8h8M1 10h8M1 11.500h8" stroke="#000"/></svg></button>
      <button aria-label="Absolute mode" class="mx-[6px] w-[15px]"><svg width="15" height="14"><path d="M.5.500h14v13H.5z" fill="none" stroke="#000"/><circle cx="7.500" cy="7" r="2" fill="none" stroke="#000"/></svg></button>
      <label for="cx" class="w-3 ml-[1px]">X:</label><input id="cx" value="0'"><svg class="ml-[2px] mr-[1px]" width="11" height="16"><use href="#spin"/></svg>
      <label for="cy" class="w-3">Y:</label><input id="cy" value="19 6/8'"><svg class="ml-[2px] mr-[1px]" width="11" height="16"><use href="#spin"/></svg>
      <label for="cz" class="w-3">Z:</label><input id="cz" value="87 5/8'"><svg class="ml-[2px] mr-[3px]" width="11" height="16"><use href="#spin"/></svg>
      <p class="w-[99px] h-full pl-[5px] leading-[20px] border border-[#555] border-b-[#858585] border-r-[#858585]">Grid = 32 6/8'</p>
    </div>
    <div class="h-[20px] flex items-center">
      <p class="grow h-full pl-[5px] leading-[20px] border-t border-l border-[#555]">Click or click-and-drag to select objects</p>
      <p class="ml-[3px] w-[99px] h-full pl-[5px] leading-[20px] border-t border-l border-[#555]">Add Time Tag</p>
      <div class="flex items-center w-[189px] [&_button]:w-[29px] [&_button]:flex [&_button]:justify-center">
        <button aria-label="Degradation"><svg width="16" height="14"><path d="M1 6l4-5 7 1 4 5-3 5-9 1z" fill="#f4f4f4"/><path d="M9 6l6-1-2 7-5 1z" fill="#999"/></svg></button>
        <button aria-label="Crossing"><svg width="16" height="14"><path d="M1 1h9v12H1z" fill="none" stroke="#000" stroke-width="1.500" stroke-dasharray="2 1"/><circle cx="11" cy="7" r="4" fill="#ddd" stroke="#333"/></svg></button>
        <button aria-label="Box mode"><svg width="16" height="15"><path d="M1 4l7-3 7 3v8l-7 3-7-3z" fill="#fff" stroke="#000"/><path d="M1 4l7 3 7-3M8 7v8M4 9l8-4" fill="none" stroke="#000"/></svg></button>
        <i></i>
        <button aria-label="3D snap" class="w-6!"><svg width="20" height="16"><path d="M2 8l4 4q3 2 4-1t-3-4" fill="none" stroke="#9c1010" stroke-width="3"/><text x="12" y="8" font-size="9" fill="#000">3</text></svg></button>
        <button aria-label="Angle snap" class="w-[22px]! h-[19px] items-center bg-[#7b8757]"><svg width="20" height="16"><path d="M1 8l4 4q3 2 4-1t-3-4" fill="none" stroke="#9c1010" stroke-width="3"/><path d="M8 13h10L14 3M12 5l3-3 2 4" fill="none" stroke="#000" stroke-width="1.500"/></svg></button>
        <button aria-label="Percent snap" class="w-6!"><svg width="20" height="16"><path d="M2 8l4 4q3 2 4-1t-3-4" fill="none" stroke="#9c1010" stroke-width="3"/><text x="9" y="8" font-size="9" fill="#000">%</text></svg></button>
        <i></i>
        <button aria-label="Spinner snap" class="w-[26px]!"><svg width="18" height="16"><path d="M2 8l4 4q3 2 4-1t-3-4" fill="none" stroke="#9c1010" stroke-width="3"/><path d="M11 1h5M11 7h5M11 13h5M11 1v12" stroke="#eee" stroke-width="2"/></svg></button>
      </div>
    </div>
  </div>
  <button class="ml-1 mt-[3px] w-12 h-[44px] shrink-0 border border-t-[#999] border-l-[#999] border-b-[#444] border-r-[#444] bg-[#787878]">Animate</button>
  <div class="w-[126px] shrink-0 mt-[3px] grid grid-rows-2 [&_button]:flex [&_button]:items-center [&_button]:justify-center [&_button]:relative">
    <div class="flex items-center fill-[#222]">
      <button aria-label="Start" class="w-7"><svg width="16" height="10"><path d="M0 0h2v10H0zM8 0v10L3 5zM15 0v10L9 5z"/></svg></button><i></i>
      <button aria-label="Previous frame" class="w-4"><svg width="10" height="10"><path d="M6 0v10L0 5zM8 0h2v10H8z"/></svg></button>
      <button aria-label="Play" class="w-[30px]"><svg width="15" height="15"><path d="M.5.500h14v14H.5z" fill="none" stroke="#000"/><path d="M4 2v11l7-5.500z"/></svg><svg class="absolute right-1 bottom-0" width="4" height="4"><use href="#fly"/></svg></button>
      <button aria-label="Next frame" class="w-5"><svg width="10" height="10"><path d="M0 0h2v10H0zM4 0l6 5-6 5z"/></svg></button><i class="ml-[2px]"></i>
      <button aria-label="End" class="w-6"><svg width="16" height="10"><path d="M1 0v10l6-5zM7 0v10l6-5zM14 0h2v10h-2z"/></svg></button>
    </div>
    <div class="flex items-center">
      <button aria-label="Key mode" class="w-[30px]"><svg width="16" height="9"><circle cx="3.500" cy="4.500" r="2.500" fill="none" stroke="#000" stroke-width="1.600"/><path d="M6 4.500h10M12 5v3M15 5v3" stroke="#000" stroke-width="1.500"/></svg></button>
      <input aria-label="Current frame" value="0" class="w-[68px]!">
      <button aria-label="Time configuration" class="w-7"><svg width="14" height="14"><path d="M1.500 1.500h9v11h-9z" fill="none" stroke="#700" stroke-width="1.500"/><circle cx="9" cy="8" r="4.500" fill="#fff" stroke="#a00"/><path d="M9 5v3h3" stroke="#a00" fill="none"/></svg></button>
    </div>
  </div>
  <div class="w-[97px] shrink-0 mt-[3px] pr-1 grid grid-cols-4 grid-rows-2 border-l border-[#505050] [&_button]:flex [&_button]:items-center [&_button]:justify-center [&_button]:relative">
    <button aria-label="Zoom"><svg width="16" height="16"><path d="M9 9l6 6" stroke="#2020a0" stroke-width="3"/><circle cx="6" cy="6" r="5" fill="#e8e8f0" stroke="#334"/></svg></button>
    <button aria-label="Zoom all"><svg width="18" height="16"><path d="M6.500 1.500h10v9h-10zM11.500 1v10M6 6h11" fill="none" stroke="#800" stroke-width="1.300"/><path d="M8 12l4 4" stroke="#2020a0" stroke-width="2.500"/><circle cx="5" cy="10" r="4" fill="#e8e8f0" stroke="#334"/></svg></button>
    <button aria-label="Zoom extents"><svg width="18" height="16"><path d="M1 4V1h3M14 1h3v3M1 12v3h3M17 12v3h-3" fill="none" stroke="#000"/><path d="M4 6l3-2h7v6l-3 3H4z" fill="#b8bee8" stroke="#202080"/><path d="M4 6h7v7M11 6l3-2" fill="none" stroke="#202080"/></svg><svg class="absolute right-0 bottom-0" width="4" height="4"><use href="#fly"/></svg></button>
    <button aria-label="Zoom extents all"><svg width="18" height="16"><path d="M6.500 1.500h10v9h-10zM11.500 1v10M6 6h11" fill="none" stroke="#800" stroke-width="1.300"/><path d="M1 8l2-2h7v6l-2 3H1z" fill="#b8bee8" stroke="#202080"/></svg><svg class="absolute right-0 bottom-0" width="4" height="4"><use href="#fly"/></svg></button>
    <button aria-label="Region zoom"><svg width="18" height="16"><path d="M1 1h16v14H1z" fill="none" stroke="#fff" stroke-width="1.500" stroke-dasharray="1 1"/><path d="M10 9l5 5" stroke="#2020a0" stroke-width="2.500"/><circle cx="8" cy="7" r="4" fill="#e8e8f0" stroke="#334"/></svg></button>
    <button aria-label="Pan"><svg width="16" height="16"><path d="M4 15 1 9l2-1 2 2V3l2-1 1 5V1l2 0v6l2-5 1 1v6l2-2 1 1-3 7z" fill="#eee" stroke="#333" stroke-width=".8"/></svg></button>
    <button aria-label="Arc rotate"><svg width="18" height="16"><path d="M9 1v9M9 10l-7 4M9 10l8 2" stroke="#202080" stroke-width="1.500"/><ellipse cx="9" cy="10" rx="6" ry="3.500" fill="none" stroke="#202080"/><path d="M7 3l2-3 2 3z" fill="#202080"/></svg><svg class="absolute right-0 bottom-0" width="4" height="4"><use href="#fly"/></svg></button>
    <button aria-label="Maximize viewport"><svg width="16" height="16"><path d="M1.500 1.500h10v10h-10zM12 7h2.500v7.500H6V12" fill="none" stroke="#202080" stroke-width="1.300"/><path d="M4 4l8 8" stroke="#000" stroke-dasharray="2 1"/></svg></button>
  </div>
</footer>

<!-- pointer arrow over the panel edge -->
<svg class="absolute right-[266px] top-[649px] pointer-events-none" width="229" height="30" aria-hidden="true"><path d="M0 7h153V0l76 15-76 14v-7H0z" fill="#fff"/></svg>

<!-- detach dialog -->
<div role="dialog" aria-labelledby="dt" class="absolute left-[833px] top-[474px] w-[254px] h-[131px] bg-[#737373] border-2 border-t-white border-l-white border-b-black border-r-black">
  <div class="mx-px mt-px h-[18px] flex items-center justify-between pl-[3px] pr-[2px] bg-linear-to-r from-[#00007c] to-[#1084d0]">
    <h2 id="dt" class="text-[12px] font-bold text-white">Detach</h2>
    <button aria-label="Close" class="w-4 h-[14px] bg-[#c6c6c6] border border-t-white border-l-white border-b-black border-r-black flex items-center justify-center"><svg width="10" height="10"><path d="M1.500 1.500 8.500 8.500M8.500 1.500 1.500 8.500" stroke="#000" stroke-width="1.600"/></svg></button>
  </div>
  <form class="px-[18px] [&_button]:h-[23px] [&_button]:border [&_button]:border-[#8a8a8a] [&_button]:border-b-[#505050] [&_button]:border-r-[#505050]">
    <div class="mt-[14px] flex items-center"><label for="das" class="w-[60px]">Detach as:</label><input id="das" value="Object01" class="w-[152px] h-[19px] pl-px bg-[#929292] text-[#222] border-2 border-t-[#111] border-l-[#111] border-b-white border-r-white outline-none selection:bg-[#000080] selection:text-white"></div>
    <div class="mt-4 flex justify-between">
      <div class="flex flex-col gap-[9px] pt-[1px] [&_label]:flex [&_label]:items-center [&_label]:gap-[6px] [&_input]:appearance-none [&_input]:w-3 [&_input]:h-3 [&_input]:bg-[#8e8e8e] [&_input]:border-2 [&_input]:border-[#454545] [&_input]:border-b-[#888] [&_input]:border-r-[#888]">
        <label><input type="checkbox">Detach To Element</label>
        <label><input type="checkbox">Detach As Clone</label>
      </div>
      <div class="w-[75px] flex flex-col gap-[3px] mr-[5px]"><button type="button">OK</button><button type="button">Cancel</button></div>
    </div>
  </form>
</div>

<script>
  // timeline: one tick per frame, a label every ten
  const track = document.getElementById('track');
  let s = '';
  for (let f = 0; f <= 240; f++) {
    const x = (0.2 + f / 240 * 99.65).toFixed(3) + '%';
    s += `<line x1="${x}" x2="${x}" y1="0" y2="11" stroke="#aeb59c"/>`;
    if (f % 10 === 0) s += `<line x1="${x}" x2="${x}" y1="23" y2="26" stroke="#aeb59c"/><text x="${x}" y="22" text-anchor="middle" fill="#2c3a1c">${f}</text>`;
  }
  track.innerHTML = s;
  // smoothing groups 1-32; unused ones on the first row stay blank
  const blank = [2, 3, 5, 6, 7];
  document.getElementById('groups').innerHTML = Array.from({length: 32}, (_, i) =>
    `<button aria-label="Group ${i + 1}">${blank.includes(i + 1) ? '' : i + 1}</button>`).join('');
  const name = document.getElementById('das');
  document.getElementById('das').focus({preventScroll: true});
  document.getElementById('das').select();
</script>
</body>
</html>
